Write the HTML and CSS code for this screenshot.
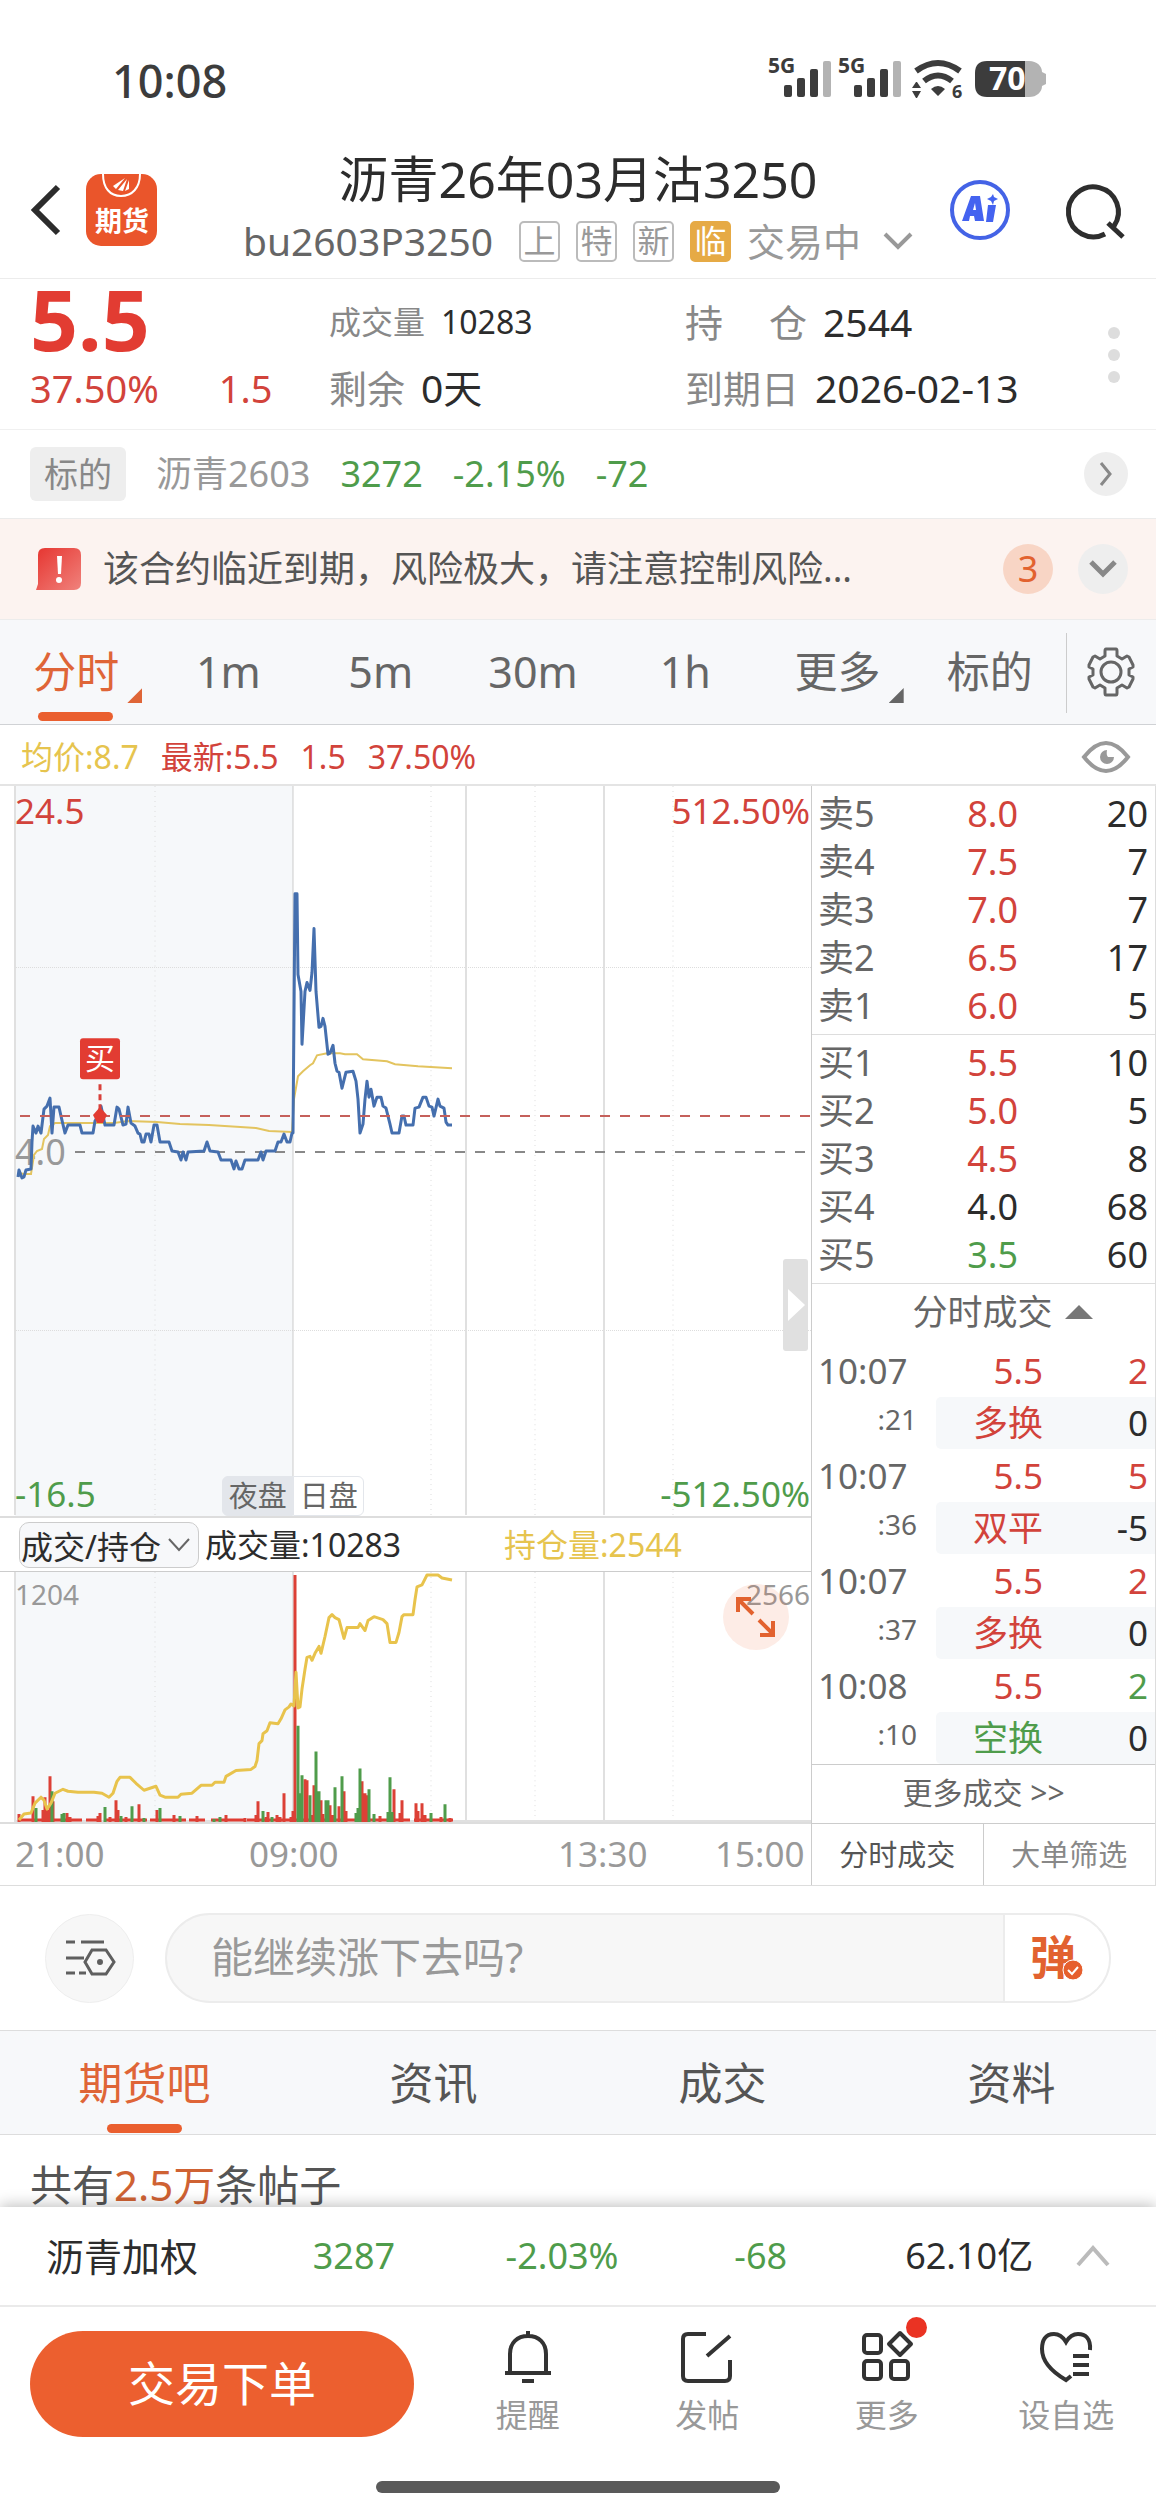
FILE: index.html
```html
<!DOCTYPE html>
<html lang="zh-CN">

<head>
    <meta charset="UTF-8">
    <meta name="viewport" content="width=device-width, initial-scale=1.0">
    <title>沥青26年03月沽3250</title>
    <link rel="stylesheet" href="styles.css">
</head>

<body>
    <div class="status">
        <span class="clock">10:08</span>
        <svg class="status-icons" width="280" height="50" viewBox="0 0 280 50" aria-hidden="true">
            <g fill="#3c3c3c">
                <text x="0" y="17" class="net">5G</text>
                <rect x="16" y="29" width="8" height="12" rx="2" />
                <rect x="29" y="22" width="8" height="19" rx="2" />
                <rect x="42" y="13" width="8" height="28" rx="2" />
                <rect x="55" y="5" width="8" height="36" rx="2" fill="#b3b3b3" />
                <text x="70" y="17" class="net">5G</text>
                <rect x="86" y="29" width="8" height="12" rx="2" />
                <rect x="99" y="22" width="8" height="19" rx="2" />
                <rect x="112" y="13" width="8" height="28" rx="2" />
                <rect x="125" y="5" width="8" height="36" rx="2" fill="#b3b3b3" />
                <path d="M148 15q22-16 44 0" fill="none" stroke="#3c3c3c" stroke-width="6" />
                <path d="M156 25q14-11 28 0" fill="none" stroke="#3c3c3c" stroke-width="6" />
                <path d="M163 33q7-6 14 0l-7 7zM144 32l4-6h1l4 6zM144 35h9l-4 7h-1z" />
                <text x="184" y="42" class="wifi-no">6</text>
                <path d="M257 5h4c8 0 13 5 13 11l4 2v10l-4 2c0 6-5 11-13 11h-4z" fill="#b3b3b3" />
                <path d="M219 5h38v36h-38c-8 0-12-4-12-12V17c0-8 4-12 12-12z" />
                <text x="221" y="34" class="battery">70</text>
            </g>
        </svg>
    </div>

    <header class="header">
        <div class="header-left">
            <button class="icon-btn" aria-label="返回">
                <svg width="32" height="52" viewBox="0 0 32 52" fill="none" stroke="#2c2c2c" stroke-width="6"><path d="M28 3L5 26l23 23" /></svg>
            </button>
            <svg class="logo" width="71" height="72" viewBox="0 0 71 72">
                <rect width="71" height="72" rx="15" fill="#ea552b" />
                <path d="M17 0c0 14 7 22 18 22S54 14 54 0" fill="none" stroke="#fff" stroke-width="2" />
                <path d="M27 12l12-8-9 11zM32 16l9-11-4 12zM39 17l4-11v9z" fill="#fff" />
                <text x="36" y="57" text-anchor="middle" class="logo-text">期货</text>
            </svg>
        </div>
        <div class="title">
            <h1>沥青26年03月沽3250</h1>
            <div class="subtitle">
                <span class="code">bu2603P3250</span>
                <span class="badge">上</span>
                <span class="badge">特</span>
                <span class="badge">新</span>
                <span class="badge badge-fill">临</span>
                <span class="state">交易中</span>
                <svg width="30" height="18" viewBox="0 0 30 18" fill="none" stroke="#999" stroke-width="4"><path d="M2 2l13 13L28 2" /></svg>
            </div>
        </div>
        <div class="header-right">
            <button class="icon-btn" aria-label="AI">
                <svg width="60" height="60" viewBox="0 0 60 60">
                    <circle cx="30" cy="30" r="28" fill="none" stroke="#4463e6" stroke-width="4" />
                    <path d="M12 41l9-25h9l4 25h-9l-1-5h-4l-1 5zM23 30h3l-1-7zM38 25h8l-3 17h-7zM43 14l1 3 4 2-4 2-1 4-2-4-4-2 4-2z" fill="#4463f0" fill-rule="evenodd" />
                </svg>
            </button>
            <button class="icon-btn" aria-label="搜索">
                <svg width="58" height="60" viewBox="0 0 58 60" fill="none" stroke="#2e2e2e" stroke-width="5"><path d="M37 54A25 25 0 1 1 46 46M40 43l15 14" /></svg>
            </button>
        </div>
    </header>

    <section class="quote">
        <strong class="price">5.5</strong>
        <div class="small"><span>成交量</span><b>10283</b></div>
        <div><span>持<i class="wide"></i>仓</span><b>2544</b></div>
        <button class="dots" aria-label="更多行情"><i></i><i></i><i></i></button>
        <div class="change"><span>37.50%</span><span>1.5</span></div>
        <div><span>剩余</span><b>0天</b></div>
        <div><span>到期日</span><b>2026-02-13</b></div>
    </section>

    <section class="underlying">
        <span class="chip">标的</span>
        <span>沥青2603</span>
        <span class="green">3272</span>
        <span class="green">-2.15%</span>
        <span class="green">-72</span>
        <button class="round round-s" aria-label="查看标的">
            <svg width="14" height="26" viewBox="0 0 14 26" fill="none" stroke="#888" stroke-width="3"><path d="M2 2l9 11-9 11" /></svg>
        </button>
    </section>

    <section class="warning">
        <svg width="46" height="44" viewBox="0 0 46 44">
            <defs><linearGradient id="warn" x2="1" y2="1"><stop stop-color="#e63530" /><stop offset="1" stop-color="#f0827c" /></linearGradient></defs>
            <path d="M9 1h29q7 0 7 7v28q0 7-7 7H0l2-6V8q0-7 7-7z" fill="url(#warn)" />
            <path d="M21 9h5l-1 18h-3z" fill="#fff" /><circle cx="23" cy="33" r="3" fill="#fff" />
        </svg>
        <p>该合约临近到期，风险极大，请注意控制风险...</p>
        <span class="round count">3</span>
        <button class="round" aria-label="展开">
            <svg width="30" height="20" viewBox="0 0 30 20" fill="none" stroke="#888" stroke-width="5"><path d="M3 3l12 12L27 3" /></svg>
        </button>
    </section>

    <nav class="periods">
        <button class="active">分时<i class="corner"></i></button>
        <button>1m</button>
        <button>5m</button>
        <button>30m</button>
        <button>1h</button>
        <button>更多<i class="corner"></i></button>
        <button>标的</button>
        <button class="setting" aria-label="设置">
            <svg width="48" height="50" viewBox="0 0 48 50" fill="none" stroke="#666" stroke-width="3" stroke-linejoin="round">
                <path d="M19 2h10q1 0 1 2v5l5 3 5-3 2 1 4 8v2l-4 2v6l4 2v2l-4 8-2 1-5-3-5 3v5q0 2-1 2H19q-1 0-1-2v-5l-5-3-5 3-2-1-4-8v-2l4-2v-6l-4-2v-2l4-8 2-1 5 3 5-3V4q0-2 1-2z" />
                <circle cx="24" cy="25" r="10" />
            </svg>
        </button>
    </nav>

    <section class="legend">
        <span class="yellow">均价:8.7</span>
        <span>最新:5.5</span>
        <span>1.5</span>
        <span>37.50%</span>
        <button class="icon-btn" aria-label="显示">
            <svg width="48" height="32" viewBox="0 0 48 32">
                <path d="M2 16Q24-12 46 16Q24 44 2 16z" fill="none" stroke="#999" stroke-width="4" />
                <path d="M25 9a7 7 0 1 0 7 7h-6q-2-2-1-7z" fill="#999" />
            </svg>
        </button>
    </section>

    <main class="market">
        <div class="charts">
            <div class="chart">
                <svg class="plot" viewBox="0 0 811 732" preserveAspectRatio="none">
                    <rect x="15" width="278" height="732" fill="#f6f8fa" />
                    <g class="dotted"><path d="M155 0v731M431 0v731M535 0v731M673 0v731" /><path class="dense" d="M16 182H811M16 546H811" /></g>
                    <path class="grid" d="M15 0v731M466 0v731M604 0v731" />
                    <path class="frame" d="M293 0v731" />
                    <text x="15" y="380" class="mid">4.0</text>
                    <path d="M75 367H811" stroke="#888" stroke-width="2" stroke-dasharray="10 10" />
                    <polyline class="avg" points="19,388 24,389 31,389 34,370 37,366 42,364 44,354 48,350 50,341 55,338 114,338 128,336 157,337 180,339 209,340 256,343 269,346 292,347 294,314 298,291 303,286 310,280 313,278 317,270 327,268 340,268 345,269 357,269 363,274 387,276 395,279 418,281 452,283" />
                    <polyline class="last" points="18,392 19,385 22,393 24,392 26,385 31,384 32,357 33,341 36,348 38,341 41,348 44,324 47,321 50,313 52,348 54,322 59,322 61,331 65,348 68,340 80,340 82,348 93,348 95,336 98,331 101,321 105,340 114,340 117,322 119,324 123,340 126,339 128,322 131,338 135,341 138,348 140,349 142,357 144,357 146,349 149,349 151,357 154,340 157,340 160,357 169,357 172,366 178,367 181,375 183,367 186,375 188,367 204,366 207,357 210,366 218,367 221,375 231,375 234,384 236,376 239,384 242,384 245,375 258,375 261,367 263,375 266,366 275,366 278,357 281,357 284,349 287,357 290,357 292,348 293,348 295,108 297,108 298,189 301,206 302,259 305,206 307,197 310,205 312,187 314,143 316,206 319,242 321,241 323,233 325,241 328,269 330,268 333,260 335,278 337,286 339,287 342,303 346,287 353,286 356,296 358,314 360,348 363,339 365,314 367,296 369,312 371,304 374,321 377,312 381,312 383,321 386,323 390,339 392,348 399,348 402,331 404,331 406,340 413,340 415,323 419,322 423,312 426,312 429,321 432,322 434,331 438,314 440,321 444,323 446,337 448,340 452,340" />
                    <path d="M20 331H811" stroke="#c5605b" stroke-width="2" stroke-dasharray="10 10" />
                    <path d="M100 299v28" stroke="#d8403a" stroke-width="3" stroke-dasharray="6 4" />
                    <path d="M100 322l7 8-4 8h-6l-4-8z" fill="#e23c32" />
                    <rect x="80" y="253" width="40" height="41" rx="3" fill="#e23c32" />
                    <text x="100" y="284" text-anchor="middle" class="buy">买</text>
                </svg>
                <span class="tag top-left red">24.5</span>
                <span class="tag top-right red">512.50%</span>
                <span class="tag bottom-left green">-16.5</span>
                <span class="tag bottom-right green">-512.50%</span>
                <div class="session"><span class="night">夜盘</span><span class="day">日盘</span></div>
                <button class="drawer" aria-label="收起盘口"></button>
            </div>

            <div class="volume-head">
                <span class="select-box">
                    <select aria-label="指标">
                        <option>成交/持仓</option>
                    </select>
                    <svg width="22" height="14" viewBox="0 0 22 14" fill="none" stroke="#666" stroke-width="2"><path d="M1 1l10 11L21 1" /></svg>
                </span>
                <span class="volume-now">成交量:10283</span>
                <span class="yellow">持仓量:2544</span>
            </div>

            <div class="volume">
                <svg class="plot" viewBox="0 0 811 252" preserveAspectRatio="none">
                    <rect x="15" width="278" height="252" fill="#f6f8fa" />
                    <path class="dotted" d="M155 0v252M431 0v252M535 0v252M673 0v252" />
                    <path class="grid" d="M15 0v252M466 0v252M604 0v252M15 251H811" />
                    <path class="frame" d="M293 0v252" />
                    <path d="M18 250H82M86 250H101M105 250H147M150 250H186M189 250H205M211 250H245M247 250H410M414 250H453" stroke="#e03c32" stroke-width="3" />
                    <path class="bars up" d="M19 252V244M33 252V226M43 252V240M45 252V227M47 252V240M50 252V206M53 252V231M67 252V243M70 252V247M98 252V246M100 252V243M110 252V247M116 252V230M118 252V240M126 252V247M139 252V234M157 252V240M174 252V245M197 252V246M226 252V245M245 252V248M256 252V245M258 252V231M266 252V247M268 252V242M277 252V245M280 252V247M284 252V223M291 252V247M293 252V241M295 252V3M305 252V209M307 252V210M312 252V245M314 252V215M321 252V230M323 252V244M330 252V235M333 252V245M339 252V236M344 252V221M346 252V241M362 252V211M365 252V223M367 252V225M380 252V246M394 252V219M400 252V243M402 252V230M416 252V233M418 252V241M422 252V233M425 252V245M441 252V247M450 252V248" />
                    <path class="bars down" d="M36 252V238M52 252V221M62 252V244M64 252V243M105 252V237M121 252V246M132 252V236M144 252V248M160 252V238M180 252V246M214 252V249M220 252V247M263 252V241M272 252V247M298 252V155M300 252V223M302 252V205M310 252V225M316 252V181M319 252V221M326 252V230M328 252V230M335 252V217M342 252V206M356 252V243M358 252V238M360 252V198M369 252V219M374 252V244M388 252V242M390 252V207M392 252V242M431 252V243M445 252V234" />
                    <polyline class="oi" points="19,250 24,244 31,243 35,233 41,227 44,230 47,239 51,233 55,223 63,219 68,221 78,222 94,222 102,223 109,227 113,223 117,211 120,207 130,207 136,213 144,220 156,216 160,225 165,227 178,227 181,224 192,223 201,215 212,215 215,212 224,212 226,206 236,200 251,199 255,196 257,190 259,173 262,170 263,163 267,160 270,152 278,153 281,148 285,139 289,136 291,133 294,135 296,101 298,137 300,136 302,118 305,98 307,86 310,85 312,89 315,82 319,75 321,82 325,65 329,46 332,43 335,46 339,48 344,67 347,56 358,56 360,52 365,59 368,49 374,45 383,48 387,52 390,71 396,71 399,61 402,45 404,43 413,43 415,28 417,15 422,13 427,3 438,3 442,6 452,8" />
                </svg>
                <span class="tag top-left">1204</span>
                <span class="tag top-right">2566</span>
                <button class="expand" aria-label="全屏">
                    <svg width="42" height="42" viewBox="0 0 42 42" fill="none" stroke="#e2622f" stroke-width="4"><path d="M18 18L4 4M3 16V3h13M24 24l14 14M25 39h13V25" /></svg>
                </button>
            </div>

            <div class="axis"><span>21:00</span><span>09:00</span><span>13:30</span><span>15:00</span></div>
        </div>

        <aside class="side">
            <table class="book">
                <tr><th>卖5</th><td class="red">8.0</td><td>20</td></tr>
                <tr><th>卖4</th><td class="red">7.5</td><td>7</td></tr>
                <tr><th>卖3</th><td class="red">7.0</td><td>7</td></tr>
                <tr><th>卖2</th><td class="red">6.5</td><td>17</td></tr>
                <tr><th>卖1</th><td class="red">6.0</td><td>5</td></tr>
            </table>
            <table class="book">
                <tr><th>买1</th><td class="red">5.5</td><td>10</td></tr>
                <tr><th>买2</th><td class="red">5.0</td><td>5</td></tr>
                <tr><th>买3</th><td class="red">4.5</td><td>8</td></tr>
                <tr><th>买4</th><td>4.0</td><td>68</td></tr>
                <tr><th>买5</th><td class="green">3.5</td><td>60</td></tr>
            </table>
            <button class="trades-title">分时成交<i></i></button>
            <table class="trades">
                <tr><th>10:07</th><td class="red">5.5</td><td class="red">2</td></tr>
                <tr class="kind"><th>:21</th><td class="red">多换</td><td>0</td></tr>
                <tr><th>10:07</th><td class="red">5.5</td><td class="red">5</td></tr>
                <tr class="kind"><th>:36</th><td class="red">双平</td><td>-5</td></tr>
                <tr><th>10:07</th><td class="red">5.5</td><td class="red">2</td></tr>
                <tr class="kind"><th>:37</th><td class="red">多换</td><td>0</td></tr>
                <tr><th>10:08</th><td class="red">5.5</td><td class="green">2</td></tr>
                <tr class="kind"><th>:10</th><td class="green">空换</td><td>0</td></tr>
            </table>
            <a class="more" href="#">更多成交 &gt;&gt;</a>
            <div class="side-tabs"><button class="active">分时成交</button><button>大单筛选</button></div>
        </aside>
    </main>

    <section class="comment">
        <button class="comment-set" aria-label="评论设置">
            <svg width="50" height="38" viewBox="0 0 50 38" fill="none" stroke="#5f5f5f" stroke-width="3">
                <path d="M1 3h9M16 3h23M1 19h18M1 34h9M14 34h7M27 11h14l8 12-8 12H27l-7-12z" /><circle cx="35" cy="23" r="2" fill="#5f5f5f" stroke-width="2" />
            </svg>
        </button>
        <div class="comment-box">
            <input type="text" placeholder="能继续涨下去吗?" aria-label="评论">
            <button class="danmu" aria-label="弹幕">弹<svg width="22" height="22" viewBox="0 0 22 22"><circle cx="11" cy="11" r="10" fill="#e65f2e" stroke="#fff" /><path d="M6 11l4 4 6-7" fill="none" stroke="#fff" stroke-width="2" /></svg></button>
        </div>
    </section>

    <nav class="tabs">
        <button class="active">期货吧</button>
        <button>资讯</button>
        <button>成交</button>
        <button>资料</button>
    </nav>

    <section class="posts">共有<em>2.5万</em>条帖子</section>

    <footer class="footer">
        <div class="index">
            <span>沥青加权</span>
            <span class="green">3287</span>
            <span class="green">-2.03%</span>
            <span class="green">-68</span>
            <span>62.10亿</span>
            <button class="icon-btn" aria-label="展开指数">
                <svg width="34" height="22" viewBox="0 0 34 22" fill="none" stroke="#bbb" stroke-width="4"><path d="M2 20L17 3l15 17" /></svg>
            </button>
        </div>
        <div class="actions">
            <button class="order">交易下单</button>
            <button class="action">
                <svg width="52" height="52" viewBox="0 0 52 52" fill="none" stroke="#333" stroke-width="4"><path d="M26 0v5M8 42V23c0-11 7-18 18-18s18 7 18 18v19M3 42h46M20 50h12" /></svg>
                提醒
            </button>
            <button class="action">
                <svg width="52" height="52" viewBox="0 0 52 52" fill="none" stroke="#333" stroke-width="4"><path d="M25 3H7q-5 0-5 5v37q0 5 5 5h37q5 0 5-5V29M26 25L49 5" /></svg>
                发帖
            </button>
            <button class="action">
                <svg width="52" height="52" viewBox="0 0 52 52" fill="none" stroke="#333" stroke-width="4"><rect x="3" y="4" width="17" height="18" rx="3" /><path d="M39 2l11 11-11 11-11-11z" stroke-linejoin="round" /><rect x="3" y="30" width="17" height="18" rx="3" /><rect x="30" y="30" width="17" height="18" rx="3" /></svg>
                更多
                <i class="dot"></i>
            </button>
            <button class="action">
                <svg width="52" height="52" viewBox="0 0 52 52" fill="none" stroke="#333" stroke-width="4"><path d="M50 19C51 7 45 3 38 3c-6 0-9 3-12 8C23 6 20 3 14 3 5 3 2 10 2 18c0 14 12 24 24 31l5-4M33 25h16M33 34h16M33 43h16" /></svg>
                设自选
            </button>
        </div>
        <div class="home"></div>
    </footer>
</body>

</html>
```
FILE: styles.css
```css
* {
    box-sizing: border-box;
}

body {
    margin: 0;
    background: #fff;
    color: #2c2c2c;
    font-family: "Noto Sans", "Noto Sans CJK SC", sans-serif;
    font-size: 36px;
    line-height: 48px;
}

button,
input,
select {
    font: inherit;
    color: inherit;
    border: 0;
    padding: 0;
    margin: 0;
    background: none;
}

svg {
    display: block;
    flex: none;
    overflow: visible;
}

h1,
p {
    margin: 0;
    font-weight: normal;
}

i {
    display: inline-block;
}

.red {
    color: #d2433b;
}

.green {
    color: #4f9c4b;
}

.yellow {
    color: #e6c44e;
}

/* 狀態列 */
.status {
    display: flex;
    justify-content: space-between;
    align-items: center;
    height: 130px;
    padding: 32px 108px 0 112px;
}

.clock {
    font-size: 45px;
    font-weight: 500;
    color: #3c3c3c;
    line-height: 96px;
}

.net {
    font-size: 21px;
    font-weight: bold;
}

.wifi-no {
    font-size: 18px;
    font-weight: bold;
}

.battery {
    font-size: 32px;
    font-weight: bold;
    fill: #fff;
}

.header {
    display: grid;
    grid-template-columns: 1fr auto 1fr;
    align-items: center;
    padding: 18px 30px 6px;
    border-bottom: 1px solid #ececec;
}

.header-left,
.header-right {
    display: flex;
    align-items: center;
    gap: 24px;
}

.header-right {
    justify-content: flex-end;
    gap: 58px;
}

.logo-text {
    font-size: 27px;
    font-weight: bold;
    fill: #fff;
}

.title {
    text-align: center;
}

.title h1 {
    font-size: 50px;
    line-height: 62px;
}

.subtitle {
    display: flex;
    align-items: center;
    justify-content: center;
    height: 62px;
    gap: 16px;
    color: #999;
    font-size: 38px;
}

.code {
    color: #666;
    margin-right: 10px;
    font-size: 39px;
}

.badge {
    width: 41px;
    height: 41px;
    border: 2px solid #bbb;
    border-radius: 5px;
    font-size: 32px;
    line-height: 36px;
}

.badge-fill {
    border-color: #e6aa45;
    background: #e6aa45;
    color: #fff;
}

.state {
    margin-right: 6px;
}

/* 報價 */
.quote {
    display: grid;
    grid-template-columns: 299fr 356fr 423fr 12px;
    grid-template-rows: 66px 66px;
    align-items: center;
    padding: 10px 36px 8px 30px;
    border-bottom: 1px solid #f0f0f0;
    font-size: 38px;
    color: #888;
}

.quote b {
    font-weight: normal;
    font-size: 39px;
    color: #2c2c2c;
    margin-left: 16px;
}

.quote .small,
.quote .small b {
    font-size: 32px;
}

.price {
    padding-bottom: 6px;
    font-size: 84px;
    line-height: 60px;
    color: #e23c32;
}

.wide {
    width: 46px;
}

.change {
    display: flex;
    gap: 60px;
    color: #d2433b;
}

.dots {
    grid-column: 4;
    grid-row: 1 / 3;
    display: grid;
    gap: 10px;
}

.dots i {
    width: 12px;
    height: 12px;
    border-radius: 50%;
    background: #ddd;
}

.underlying {
    display: flex;
    align-items: center;
    gap: 30px;
    height: 89px;
    padding: 0 28px 0 30px;
    border-bottom: 1px solid #ebebeb;
    color: #999;
}

.chip {
    padding: 3px 14px;
    border-radius: 6px;
    background: #eee;
    font-size: 34px;
    color: #888;
}

.round {
    display: flex;
    align-items: center;
    justify-content: center;
    width: 50px;
    height: 50px;
    border-radius: 50%;
    background: #eee;
}

.round-s {
    width: 44px;
    height: 44px;
    margin-left: auto;
}

.warning {
    display: flex;
    align-items: center;
    height: 101px;
    padding: 0 28px 0 36px;
    background: #fcf3f0;
    border-bottom: 1px solid #ececec;
    color: #555;
}

.warning p {
    flex: 1;
    margin-left: 21px;
}

.count {
    margin-right: 25px;
    background: #f8d5c5;
    color: #e2622f;
}

/* 週期 */
.periods {
    display: grid;
    grid-template-columns: repeat(7, 1fr) 90px;
    height: 105px;
    background: #f7f8fa;
    border-bottom: 1px solid #d0d2d5;
    font-size: 43px;
    color: #666;
}

.periods button {
    position: relative;
}

.periods .active {
    color: #df6537;
}

.periods .active::after,
.tabs .active::after {
    content: "";
    position: absolute;
    left: 50%;
    bottom: 3px;
    width: 75px;
    height: 9px;
    margin-left: -38px;
    border-radius: 5px;
    background: #ea5f2f;
}

.corner {
    position: absolute;
    right: 10px;
    bottom: 21px;
    width: 15px;
    height: 15px;
    background: currentColor;
    clip-path: polygon(100% 0, 100% 100%, 0 100%);
}

.setting {
    display: flex;
    align-items: center;
    justify-content: center;
}

.setting::before {
    content: "";
    position: absolute;
    left: 0;
    top: 13px;
    bottom: 11px;
    border-left: 1px solid #ccc;
}

.legend {
    display: flex;
    align-items: center;
    gap: 22px;
    height: 61px;
    padding: 4px 26px 0 21px;
    border-bottom: 2px solid #e4e4e4;
    font-size: 32px;
    color: #d2433b;
}

.legend .icon-btn {
    margin-left: auto;
}

.market {
    display: grid;
    grid-template-columns: 1fr 345px;
    border-bottom: 1px solid #ddd;
}

.chart,
.volume {
    position: relative;
    height: 732px;
    border-bottom: 2px solid #ddd;
}

.plot {
    width: 100%;
    height: 100%;
}

.grid {
    fill: none;
    stroke: #e0e0e0;
    stroke-width: 2;
}

.frame {
    stroke: #ccc;
}

.dotted {
    fill: none;
    stroke: #ddd;
    stroke-dasharray: 1 4;
}

.dense {
    stroke-dasharray: 1 1;
}

.mid {
    font-size: 36px;
    fill: #999;
}

.avg {
    fill: none;
    stroke: #e3c45f;
    stroke-width: 2;
}

.last {
    fill: none;
    stroke: #456fae;
    stroke-width: 3;
    stroke-linejoin: round;
}

.buy {
    font-size: 30px;
    fill: #fff;
}

.bars {
    stroke-width: 3;
}

.up {
    stroke: #dc4036;
}

.down {
    stroke: #4f9c4b;
}

.oi {
    fill: none;
    stroke: #e8c34c;
    stroke-width: 3;
    stroke-linejoin: round;
}

.tag {
    position: absolute;
    font-size: 35px;
    line-height: 48px;
}

.top-left {
    top: 1px;
    left: 15px;
}

.top-right {
    top: 1px;
    right: 1px;
}

.bottom-left {
    bottom: -2px;
    left: 15px;
}

.bottom-right {
    bottom: -2px;
    right: 1px;
}

.session {
    position: absolute;
    left: 27.4%;
    bottom: 0;
    display: flex;
    font-size: 29px;
    line-height: 38px;
    color: #666;
}

.session span {
    width: 71px;
    border: 1px solid #e3e6eb;
    border-radius: 0 6px 6px 0;
    background: #fff;
    text-align: center;
}

.session .night {
    border-radius: 6px 0 0 6px;
    background: #e3e6eb;
}

.drawer {
    position: absolute;
    right: 3px;
    top: 473px;
    width: 25px;
    height: 92px;
    border-radius: 3px;
    background: #e0e0e0;
}

.drawer::after {
    content: "";
    display: block;
    margin-left: 5px;
    border-left: 17px solid #fff;
    border-top: 16px solid transparent;
    border-bottom: 16px solid transparent;
}

.volume-head {
    display: flex;
    align-items: center;
    height: 54px;
    padding-left: 19px;
    border-bottom: 1px solid #ccc;
    font-size: 32px;
}

.select-box {
    display: flex;
    align-items: center;
    width: 180px;
    height: 46px;
    padding-left: 1px;
    border: 1px solid #ccc;
    border-radius: 10px;
    background: #f7f8fa;
}

.select-box select {
    appearance: none;
    width: 147px;
    height: 44px;
}

.volume-now {
    width: 299px;
    margin-left: 6px;
}

.volume {
    height: 252px;
}

.volume .tag {
    top: -2px;
    font-size: 28px;
    color: #999;
}

.expand {
    position: absolute;
    top: 12px;
    right: 22px;
    width: 66px;
    height: 66px;
    padding: 12px;
    border-radius: 50%;
    background: rgba(236, 96, 48, 0.12);
}

.axis {
    display: grid;
    grid-template-columns: 234fr 309fr 157fr 96fr;
    height: 60px;
    padding-left: 15px;
    line-height: 60px;
    font-size: 35px;
    color: #999;
}

/* 盤口 */
.side {
    border-left: 1px solid #ccc;
    border-right: 1px solid #ddd;
}

table {
    width: 100%;
    border-spacing: 0;
    table-layout: fixed;
}

th,
td {
    padding: 0;
    text-align: right;
    font-weight: normal;
}

th {
    width: 100px;
    padding-left: 6px;
    text-align: left;
    color: #666;
}

td:last-child {
    padding-right: 7px;
}

.book {
    padding: 4px 0;
    border-bottom: 1px solid #ddd;
}

.book tr {
    height: 48px;
}

.book td:nth-child(2) {
    width: 106px;
}

.trades-title {
    display: flex;
    align-items: center;
    justify-content: center;
    gap: 12px;
    width: 100%;
    height: 60px;
    padding: 0 0 4px 38px;
    font-size: 35px;
    color: #666;
}

.trades-title i {
    border: 14px solid transparent;
    border-top: 0;
    border-bottom: 14px solid #777;
}

.trades th {
    width: 124px;
}

.trades td:nth-child(2) {
    width: 107px;
}

.trades tr {
    height: 53px;
    font-size: 35px;
}

.trades .kind {
    height: 52px;
}

.kind th {
    padding: 0 19px 8px 0;
    text-align: right;
    font-size: 28px;
    line-height: 44px;
}

.kind td {
    background: #f6f8fa;
}

.kind td:nth-child(2) {
    border-radius: 5px 0 0 5px;
}

.more {
    display: block;
    height: 60px;
    border-top: 1px solid #ccc;
    border-bottom: 1px solid #ccc;
    text-align: center;
    text-decoration: none;
    font-size: 30px;
    line-height: 56px;
    color: #666;
}

.side-tabs {
    display: grid;
    grid-template-columns: 1fr 1fr;
    height: 61px;
    font-size: 29px;
    color: #888;
}

.side-tabs .active {
    border-right: 1px solid #ccc;
    color: #555;
}

/* 評論 */
.comment {
    display: flex;
    align-items: center;
    gap: 31px;
    height: 144px;
    padding: 0 45px;
}

.comment-set {
    display: flex;
    align-items: center;
    justify-content: center;
    width: 89px;
    height: 89px;
    border: 1px solid #eee;
    border-radius: 50%;
    background: #f7f7f7;
}

.comment-box {
    display: flex;
    flex: 1;
    height: 90px;
    border: 2px solid #ececec;
    border-radius: 45px;
    background: #f7f7f7;
    overflow: hidden;
}

.comment-box input {
    flex: 1;
    min-width: 0;
    padding: 0 0 3px 44px;
    font-size: 42px;
}

.comment-box input::placeholder {
    color: #999;
    opacity: 1;
}

.danmu {
    position: relative;
    width: 106px;
    padding: 0 8px 4px 0;
    border-left: 2px solid #ececec;
    background: #fff;
    font-size: 46px;
    font-weight: bold;
    color: #e2622f;
}

.danmu svg {
    position: absolute;
    right: 25px;
    bottom: 20px;
}

.tabs {
    display: grid;
    grid-template-columns: repeat(4, 1fr);
    height: 105px;
    background: #f7f8fa;
    border-top: 1px solid #ddd;
    border-bottom: 1px solid #ddd;
    font-size: 44px;
    color: #555;
}

.tabs button {
    position: relative;
}

.tabs .active {
    color: #df6537;
}

.tabs .active::after {
    bottom: 1px;
}

.posts {
    height: 72px;
    padding: 26px 30px 0;
    overflow: hidden;
    font-size: 42px;
    color: #555;
    white-space: nowrap;
}

.posts em {
    font-style: normal;
    color: #cf6233;
}

.footer {
    position: sticky;
    bottom: 0;
    background: #fff;
    box-shadow: 0 -2px 14px rgba(0, 0, 0, 0.25);
}

.index {
    display: grid;
    grid-template-columns: 267fr 193fr 229fr 171fr 171fr 34px;
    justify-items: start;
    align-items: center;
    height: 100px;
    padding: 0 46px;
    border-bottom: 2px solid #eaeaea;
}

.index span:first-child {
    font-size: 38px;
}

.actions {
    display: flex;
    height: 174px;
    padding: 24px 0 0 30px;
}

.order {
    width: 384px;
    height: 106px;
    margin-right: 24px;
    padding-bottom: 2px;
    border-radius: 53px;
    background: #ec5f2f;
    color: #fff;
    font-size: 47px;
}

.action {
    position: relative;
    display: flex;
    flex-direction: column;
    align-items: center;
    flex: 1;
    gap: 8px;
    font-size: 32px;
    color: #999;
}

.dot {
    position: absolute;
    left: 50%;
    top: -14px;
    width: 21px;
    height: 21px;
    margin-left: 19px;
    border-radius: 50%;
    background: #ea3323;
}

.home {
    width: 35%;
    height: 12px;
    margin: 0 auto;
    border-radius: 6px;
    background: #5a5a5a;
}

.footer::after {
    content: "";
    display: block;
    height: 18px;
}
```
